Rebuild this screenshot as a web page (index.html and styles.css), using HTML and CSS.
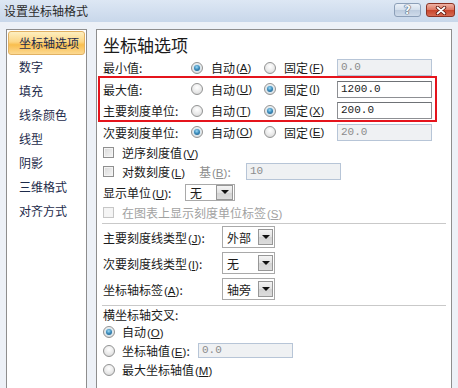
FILE: index.html
```html
<!DOCTYPE html>
<html lang="zh-CN">
<head>
<meta charset="utf-8">
<title>设置坐标轴格式</title>
<link rel="stylesheet" href="styles.css">
</head>
<body>
<div class="dialog">
  <div class="titlebar">
    <span class="title">设置坐标轴格式</span>
    <div class="tbtns">
      <span class="tbtn help">?</span>
      <span class="tbtn close"><svg width="12" height="9" viewBox="0 0 12 9"><path d="M2.5 1.5 L9.5 7.5 M9.5 1.5 L2.5 7.5" stroke="#5a1208" stroke-width="3.4" stroke-linecap="round"/><path d="M2.5 1.5 L9.5 7.5 M9.5 1.5 L2.5 7.5" stroke="#ffffff" stroke-width="1.8" stroke-linecap="round"/></svg></span>
    </div>
  </div>
  <div class="main">
    <ul class="nav">
      <li class="sel">坐标轴选项</li>
      <li>数字</li>
      <li>填充</li>
      <li>线条颜色</li>
      <li>线型</li>
      <li>阴影</li>
      <li>三维格式</li>
      <li>对齐方式</li>
    </ul>
    <div class="panel">
      <h1 class="heading">坐标轴选项</h1>
      <div class="axisgrid">
        <span class="lbl">最小值:</span>
        <span class="opt"><span class="radio on"></span>自动<span class="mn">(<u>A</u>)</span></span>
        <span class="opt"><span class="radio"></span>固定<span class="mn">(<u>F</u>)</span></span>
        <span class="field dis">0.0</span>

        <span class="lbl">最大值:</span>
        <span class="opt"><span class="radio"></span>自动<span class="mn">(<u>U</u>)</span></span>
        <span class="opt"><span class="radio on"></span>固定<span class="mn">(<u>I</u>)</span></span>
        <span class="field">1200.0</span>

        <span class="lbl">主要刻度单位:</span>
        <span class="opt"><span class="radio"></span>自动<span class="mn">(<u>T</u>)</span></span>
        <span class="opt"><span class="radio on"></span>固定<span class="mn">(<u>X</u>)</span></span>
        <span class="field">200.0</span>

        <span class="lbl">次要刻度单位:</span>
        <span class="opt"><span class="radio on"></span>自动<span class="mn">(<u>O</u>)</span></span>
        <span class="opt"><span class="radio"></span>固定<span class="mn">(<u>E</u>)</span></span>
        <span class="field dis">20.0</span>
      </div>

      <div class="crow r19">
        <span class="chk"></span><span class="ctext">逆序刻度值<span class="mn">(<u>V</u>)</span></span>
      </div>
      <div class="crow r19">
        <span class="chkgroup"><span class="chk"></span><span class="ctext">对数刻度<span class="mn">(<u>L</u>)</span></span></span>
        <span class="base dim">基<span class="mn">(<u>B</u>)</span>:</span>
        <span class="field dis w95">10</span>
      </div>
      <div class="crow r22">
        <span class="unitlbl">显示单位<span class="mn">(<u>U</u>)</span>:</span>
        <span class="combo small"><span class="ctxt">无</span><span class="drop"><span class="tri"></span></span></span>
      </div>
      <div class="crow r18 disabled">
        <span class="chk off"></span><span class="ctext">在图表上显示刻度单位标签<span class="mn">(<u>S</u>)</span></span>
      </div>

      <div class="sep first"></div>

      <div class="srow">
        <span class="slbl">主要刻度线类型<span class="mn">(<u>J</u>)</span>:</span>
        <span class="combo big"><span class="ctxt">外部</span><span class="drop"><span class="tri"></span></span></span>
      </div>
      <div class="srow">
        <span class="slbl">次要刻度线类型<span class="mn">(<u>I</u>)</span>:</span>
        <span class="combo big"><span class="ctxt">无</span><span class="drop"><span class="tri"></span></span></span>
      </div>
      <div class="srow">
        <span class="slbl">坐标轴标签<span class="mn">(<u>A</u>)</span>:</span>
        <span class="combo big"><span class="ctxt">轴旁</span><span class="drop"><span class="tri"></span></span></span>
      </div>

      <div class="sep second"></div>

      <div class="crow r16">横坐标轴交叉:</div>
      <div class="crow r19">
        <span class="radio on"></span><span class="ctext">自动<span class="mn">(<u>O</u>)</span></span>
      </div>
      <div class="crow r19">
        <span class="radio"></span><span class="ctext axval">坐标轴值<span class="mn">(<u>E</u>)</span>:</span>
        <span class="field dis w95 h15">0.0</span>
      </div>
      <div class="crow r19">
        <span class="radio"></span><span class="ctext">最大坐标轴值<span class="mn">(<u>M</u>)</span></span>
      </div>

      <div class="highlight"></div>
    </div>
  </div>
</div>
</body>
</html>
```

FILE: styles.css
```css
* { box-sizing: border-box; margin: 0; padding: 0; }
html, body { width: 458px; height: 388px; overflow: hidden; }
body {
  font-family: "Noto Sans CJK SC", "Noto Sans", sans-serif;
  font-size: 12px;
  color: #1b1b1b;
  background: #edf1f7;
}
u { text-decoration: underline; text-underline-offset: 1px; }
.mn {
  font-family: "Liberation Sans", "DejaVu Sans", sans-serif;
  font-size: 11.5px;
  margin-left: 1px;
}

.dialog { height: 388px; display: flex; flex-direction: column; }

.titlebar {
  height: 22px;
  flex: none;
  display: flex;
  justify-content: space-between;
  align-items: center;
  padding: 0 3px 0 4px;
  background: linear-gradient(#dde7f4, #c8d7ea);
}
.title { color: #2b2b2b; line-height: 14px; }
.tbtns { display: flex; gap: 5px; align-self: flex-start; margin-top: 3px; }
.tbtn {
  height: 14px;
  border-radius: 3px;
  display: flex;
  align-items: center;
  justify-content: center;
}
.help {
  width: 27px;
  border: 1px solid #8c9fb8;
  background: linear-gradient(#eaf0f8, #d3deeb 50%, #bccbde 51%, #cfdbea);
  font-family: "DejaVu Sans", sans-serif;
  font-weight: bold;
  font-size: 12px;
  line-height: 12px;
  color: #f6f8fb;
  text-shadow: 0 0 1px #44556d, 0 0 1px #44556d, 0 0 1px #44556d;
}
.close {
  width: 29px;
  border: 1px solid #8b3324;
  background: linear-gradient(#efb3a5, #dc7660 50%, #c8442b 51%, #d66a52);
}
.close svg { display: block; }

.main {
  flex: 1;
  display: flex;
  gap: 9px;
  padding: 7px 6px 0 6px;
  min-height: 0;
}

.nav {
  width: 81px;
  flex: none;
  list-style: none;
  background: #fff;
  border: 1px solid #8e8e8e;
  border-bottom: none;
  padding: 1px;
}
.nav li {
  height: 24px;
  line-height: 24px;
  padding-left: 11px;
  color: #1d2b4b;
  white-space: nowrap;
}
.nav li.sel {
  background: linear-gradient(#fdefc0, #fcd685 45%, #f9be4e 58%, #fcd992);
  border: 1px solid #e1b163;
  border-radius: 3px;
  line-height: 22px;
  padding-left: 10px;
}

.panel {
  flex: 1;
  position: relative;
  background: #fff;
  border: 1px solid #8e8e8e;
  border-bottom: none;
  padding: 5px 5px 0 6px;
}
.heading {
  font-size: 17px;
  font-weight: normal;
  line-height: 20px;
  height: 20px;
  margin-bottom: 2px;
  color: #1b1b1b;
}

.axisgrid {
  display: grid;
  grid-template-columns: 88px 73px 73px 95px;
  grid-auto-rows: 21.5px;
  align-items: center;
}
.lbl { white-space: nowrap; }
.opt { display: flex; align-items: center; white-space: nowrap; }
.opt .radio { margin-right: 8px; }

.radio {
  width: 12px;
  height: 12px;
  flex: none;
  border-radius: 50%;
  border: 1px solid #929393;
  background: radial-gradient(circle at 50% 35%, #ffffff, #e9e9e9 55%, #cfcfcf);
  display: flex;
  align-items: center;
  justify-content: center;
}
.radio.on::after {
  content: "";
  width: 6px;
  height: 6px;
  border-radius: 50%;
  background: radial-gradient(circle at 45% 35%, #9fdcf6, #3f8fbf 45%, #134f78);
  box-shadow: 0 0 0 1px #d7e7f0;
}

.field {
  height: 17px;
  border: 1px solid #8d8f93;
  border-top-color: #6f7276;
  background: #fff;
  padding-left: 3px;
  line-height: 15px;
  color: #1b1b1b;
  font-family: "Liberation Mono", monospace;
  font-size: 11px;
}
.field.dis {
  background: #eff1f3;
  border-color: #b7c5d7;
  color: #8c8c8c;
}
.w95 { width: 95px; flex: none; }
.h15 { height: 15px; line-height: 13px; }

.crow { display: flex; align-items: center; white-space: nowrap; }
.r16 { height: 16px; }
.r18 { height: 18px; }
.r19 { height: 19px; }
.r22 { height: 22px; }

.chk {
  width: 11px;
  height: 11px;
  flex: none;
  border: 1px solid #8f8f8f;
  background: linear-gradient(135deg, #d9d9d9, #f5f5f5);
  box-shadow: inset 0 0 0 1px #f4f4f4;
}
.chk.off { border-color: #c6c6c6; background: #f5f5f5; }
.ctext { margin-left: 8px; }
.radio + .ctext { margin-left: 7px; }
.disabled { color: #a2a2a2; }

.chkgroup { display: flex; align-items: center; width: 96px; flex: none; }
.base { width: 47px; flex: none; }
.dim { color: #8e8e8e; }
.unitlbl { width: 82px; flex: none; }
.axval { width: 76px; flex: none; }

.combo {
  display: flex;
  border: 1px solid #a9a9a9;
  background: #fff;
  flex: none;
}
.combo.small { width: 50px; height: 17px; padding: 0 1px 0 0; }
.combo.big { width: 53px; height: 22px; padding: 2px 1px 2px 0; }
.ctxt { flex: 1; padding-left: 4px; display: flex; align-items: center; }
.combo.small .drop { width: 17px; }
.combo.big .drop { width: 15px; }
.drop {
  flex: none;
  border: 1px solid #979797;
  background: linear-gradient(#f4f4f4, #e2e2e2 50%, #d3d3d3 51%, #dcdcdc);
  display: flex;
  align-items: center;
  justify-content: center;
}
.tri {
  width: 0;
  height: 0;
  border-left: 4px solid transparent;
  border-right: 4px solid transparent;
  border-top: 4px solid #111;
}

.sep { height: 1px; background: #c9c9c9; margin-left: -1px; }
.sep.first { margin-top: 2px; }
.sep.second { margin-top: 3px; }

.srow { height: 26px; display: flex; align-items: center; white-space: nowrap; }
.slbl { width: 119px; flex: none; }

.highlight {
  position: absolute;
  left: 1px;
  top: 46px;
  width: 339px;
  height: 46px;
  border: 2px solid #e5141c;
}
```
